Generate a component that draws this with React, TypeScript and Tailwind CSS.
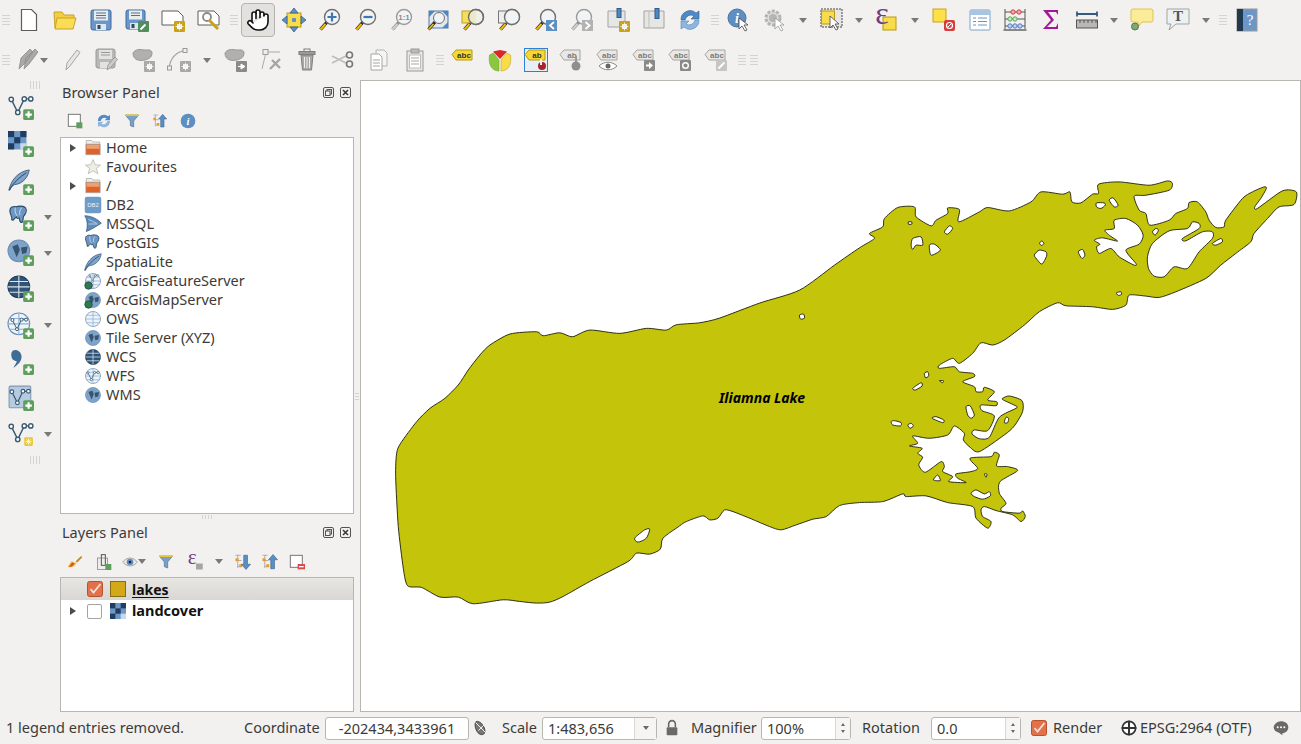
import type { ReactNode } from 'react';
import { Hand } from 'lucide-react';

// closed curve through points picked off the zoomed-in reference
type Pt = [number, number];
const z = (ox: number, oy: number, flat: number[]): Pt[] => {
  const out: Pt[] = [];
  for (let i = 0; i < flat.length; i += 2) out.push([ox + flat[i] / 3, oy + flat[i + 1] / 3]);
  return out;
};
const smooth = (pts: Pt[]) => {
  const n = pts.length;
  const f = (v: number) => v.toFixed(1);
  let d = `M${f(pts[0][0])} ${f(pts[0][1])}`;
  for (let i = 0; i < n; i++) {
    const p0 = pts[(i - 1 + n) % n];
    const p1 = pts[i];
    const p2 = pts[(i + 1) % n];
    const p3 = pts[(i + 2) % n];
    const k = 8;
    d += `C${f(p1[0] + (p2[0] - p0[0]) / k)} ${f(p1[1] + (p2[1] - p0[1]) / k)} ${f(p2[0] - (p3[0] - p1[0]) / k)} ${f(p2[1] - (p3[1] - p1[1]) / k)} ${f(p2[0])} ${f(p2[1])}`;
  }
  return d + 'Z';
};

const outline: Pt[] = [
  ...z(380, 320, [83, 798, 70, 745, 55, 620, 47, 470, 50, 400, 62, 370, 110, 305, 150, 265, 195, 235, 235, 195, 265, 150, 300, 105, 330, 75, 390, 42, 470, 35, 490, 47, 540, 38, 578, 50, 630, 30, 720, 40, 800, 25, 860, 30, 890, 14, 960, 8]),
  [720, 318], [760, 303], [800, 290], [835, 265],
  ...z(860, 170, [0, 233, 45, 205, 30, 190, 70, 170, 75, 145, 115, 112, 165, 110, 170, 140, 215, 167, 230, 150, 265, 130, 265, 113, 300, 118, 298, 155, 360, 125, 385, 112, 450, 122, 515, 95, 545, 65, 610, 72, 632, 65, 638, 95, 665, 98, 700, 72, 718, 70, 718, 42, 780, 35, 870, 45, 925, 32, 940, 40, 930, 60, 860, 75, 825, 78, 840, 120, 860, 130, 872, 165, 930, 150, 950, 130, 985, 115, 990, 97, 1015, 95, 1040, 125, 1050, 150, 1070, 172, 1095, 170, 1100, 150, 1150, 85, 1180, 65, 1215, 50, 1222, 55, 1205, 85, 1187, 110, 1195, 115, 1270, 62, 1312, 65, 1305, 103, 1260, 110, 1230, 140, 1185, 190, 1175, 215, 1130, 250, 1085, 285, 1040, 325, 950, 365, 900, 382, 860, 378, 810, 375, 800, 405, 760, 418, 700, 410, 620, 407, 595, 398, 540, 425, 495, 465]),
  ...z(860, 340, [435, 0, 400, 15, 365, 8, 340, 40, 300, 70, 280, 55, 240, 75, 240, 85, 285, 80, 300, 95, 340, 100, 345, 110, 310, 125, 345, 140, 350, 155, 370, 155, 375, 142, 405, 155, 385, 180, 412, 185, 410, 197, 365, 195, 368, 212, 405, 228, 385, 272, 345, 270, 338, 282, 360, 296, 390, 292, 420, 232, 470, 205, 470, 198, 432, 180, 430, 175, 450, 168, 488, 182, 490, 215, 465, 258, 435, 285, 360, 335, 332, 322, 312, 300, 315, 280, 285, 258, 265, 285, 210, 295, 160, 288, 175, 310, 150, 318, 188, 325, 175, 340, 190, 352, 178, 375, 198, 397, 245, 365, 255, 380, 250, 395, 280, 410, 268, 425, 320, 428, 295, 415, 290, 402, 335, 395, 355, 385, 332, 355, 395, 350, 405, 337, 420, 345, 412, 378, 445, 380, 475, 392, 422, 425, 420, 460, 440, 490, 425, 505, 430, 515, 480, 520, 490, 513, 498, 530, 485, 545, 460, 525, 410, 512, 375, 500, 365, 510, 370, 530, 395, 545, 385, 565, 350, 535, 340, 500, 265, 488, 200, 468, 140, 470, 130, 462, 70, 485]),
  ...z(680, 470, [540, 98, 480, 107, 440, 140, 400, 148, 350, 165, 305, 180, 270, 170, 215, 147, 165, 127, 135, 120, 115, 145, 90, 150, 70, 138, 20, 155, 0, 168]),
  ...z(380, 320, [850, 655, 842, 688, 810, 703, 770, 700, 745, 725, 630, 785, 550, 830, 510, 847, 470, 850, 420, 845, 370, 840, 280, 852, 235, 832, 180, 832, 125, 803]),
];

const holes: Pt[][] = [
  z(860, 170, [147, 155, 157, 155, 157, 162, 147, 162]),
  z(860, 170, [155, 225, 160, 205, 185, 200, 190, 225, 170, 225, 160, 238]),
  z(860, 170, [210, 225, 225, 222, 243, 240, 215, 255]),
  z(860, 170, [255, 185, 270, 167, 280, 175, 265, 192]),
  z(860, 170, [712, 98, 735, 98, 738, 105, 725, 115, 712, 110]),
  z(860, 170, [750, 90, 762, 83, 777, 105, 765, 110]),
  z(860, 170, [547, 212, 554, 220, 547, 226, 541, 220]),
  z(860, 170, [525, 255, 540, 240, 560, 245, 562, 258, 548, 282, 535, 270]),
  z(860, 170, [657, 245, 670, 238, 677, 255, 668, 265]),
  z(860, 170, [737, 180, 765, 175, 765, 150, 800, 145, 835, 165, 852, 195, 840, 222, 800, 240, 830, 280, 825, 285, 780, 260, 755, 235, 720, 250, 712, 230, 722, 222, 705, 210, 730, 203, 775, 213, 750, 195]),
  z(860, 170, [880, 185, 890, 175, 898, 180, 888, 195]),
  z(860, 170, [865, 260, 880, 220, 930, 182, 985, 175, 1000, 155, 1020, 160, 1020, 175, 970, 205, 980, 212, 1030, 185, 1060, 185, 1060, 205, 1020, 245, 985, 295, 945, 290, 915, 320, 885, 318, 868, 295]),
  z(860, 170, [1060, 220, 1085, 205, 1090, 215, 1070, 225]),
  z(860, 170, [772, 368, 785, 365, 787, 373, 777, 376]),
  z(860, 340, [195, 100, 205, 95, 208, 108, 198, 113]),
  z(860, 340, [160, 145, 185, 128, 188, 138, 168, 150]),
  z(860, 340, [240, 122, 252, 122, 250, 128]),
  z(860, 340, [320, 200, 333, 198, 345, 225, 335, 235, 325, 225]),
  z(860, 340, [440, 232, 448, 235, 445, 248, 435, 248]),
  z(860, 340, [95, 245, 105, 242, 125, 248, 123, 258, 100, 255]),
  z(860, 340, [145, 255, 155, 250, 162, 258, 152, 265]),
  z(860, 340, [218, 235, 230, 230, 253, 240, 250, 248]),
  z(860, 340, [222, 420, 235, 405, 243, 422]),
  z(860, 340, [375, 402, 383, 403, 380, 412]),
  z(860, 340, [335, 460, 350, 450, 375, 462, 390, 455, 393, 468, 370, 478, 345, 470]),
  z(380, 320, [765, 655, 795, 630, 810, 628, 800, 655, 775, 667]),
  [[800, 315], [804, 314], [805, 318], [801, 319]],
];

const lakePath = smooth(outline) + holes.map(smooth).join('');

// icon primitives, 24 x 24 box
function Ic({ children, size = 24 }: { children: ReactNode; size?: number }) {
  return (
    <svg width={size} height={size} viewBox="0 0 24 24" className="block shrink-0 overflow-visible">
      {children}
    </svg>
  );
}

function Slot({ children, className = 'w-[36px]' }: { children?: ReactNode; className?: string }) {
  return <div className={`flex h-full shrink-0 items-center justify-center ${className}`}>{children}</div>;
}

function Drop({ className = 'w-[14px]' }: { className?: string }) {
  return (
    <div className={`flex h-full shrink-0 items-center justify-center ${className}`}>
      <div className="h-0 w-0 border-x-[4px] border-t-[5px] border-x-transparent border-t-[#7b7974]" />
    </div>
  );
}

function GripV({ className = 'w-[14px]' }: { className?: string }) {
  return (
    <div className={`flex h-full shrink-0 items-center justify-center ${className}`}>
      <div className="flex w-[8px] flex-col gap-[2px]">
        <div className="h-px bg-[#d5d3cf]" />
        <div className="h-px bg-[#d5d3cf]" />
        <div className="h-px bg-[#d5d3cf]" />
        <div className="h-px bg-[#d5d3cf]" />
      </div>
    </div>
  );
}

function GripH() {
  return (
    <div className="flex h-[8px] items-center justify-center gap-[2px]">
      <div className="h-[8px] w-px bg-[#d5d3cf]" />
      <div className="h-[8px] w-px bg-[#d5d3cf]" />
      <div className="h-[8px] w-px bg-[#d5d3cf]" />
      <div className="h-[8px] w-px bg-[#d5d3cf]" />
    </div>
  );
}

const Plus = ({ x = 14, y = 14 }: { x?: number; y?: number }) => (
  <g>
    <rect x={x} y={y} width="10" height="10" rx="1.5" fill="#5f9e5c" />
    <path d={`M${x + 5} ${y + 2}v6M${x + 2} ${y + 5}h6`} stroke="#fff" strokeWidth="2" />
  </g>
);

const Gear = ({ x = 13, y = 13, grey = false }: { x?: number; y?: number; grey?: boolean }) => (
  <g>
    <rect x={x} y={y} width="11" height="11" rx="1" fill={grey ? '#a8a8a6' : '#c9a21a'} />
    <circle cx={x + 5.5} cy={y + 5.5} r="2" fill="none" stroke="#fff" strokeWidth="1.2" />
    <path d={`M${x + 5.5} ${y + 1.5}v8M${x + 1.5} ${y + 5.5}h8M${x + 2.8} ${y + 2.8}l5.4 5.4M${x + 8.2} ${y + 2.8}l-5.4 5.4`} stroke="#fff" strokeWidth="0.8" />
  </g>
);

function Mag({ children, grey = false, lens = '#f1f4f6' }: { children?: ReactNode; grey?: boolean; lens?: string }) {
  return (
    <Ic>
      <path d="M9 14L2.5 21.5" stroke={grey ? '#8f8f8d' : '#2e2c28'} strokeWidth="3.4" />
      <path d="M7.5 16L2.5 21.5" stroke={grey ? '#cfcfcd' : '#eeb913'} strokeWidth="2" />
      <circle cx="14" cy="9" r="7.5" fill={lens} stroke={grey ? '#9b9b99' : '#6f6f6d'} strokeWidth="1.4" />
      {children}
    </Ic>
  );
}

const Doc = ({ grey = false }: { grey?: boolean }) => (
  <path d="M4.5 1.5h10l5 5v16h-15z" fill="#fff" stroke={grey ? '#999' : '#5c5c5a'} strokeWidth="1.2" />
);

const VShape = ({ color = '#3a5a72', dx = 0, dy = 0, s = 1 }: { color?: string; dx?: number; dy?: number; s?: number }) => (
  <g transform={`translate(${dx} ${dy}) scale(${s})`} fill="#fff" stroke={color} strokeWidth="1.3">
    <path d="M3 5L9 17L15 4.500L21 4.500" fill="none" />
    <circle cx="3" cy="5" r="2" />
    <circle cx="9" cy="17" r="2" />
    <circle cx="15" cy="4.500" r="2" />
    <circle cx="21" cy="4.500" r="2" />
  </g>
);

const Globe = ({ dark = false, pale = false, r = 10, cx = 12, cy = 12 }: { dark?: boolean; pale?: boolean; r?: number; cx?: number; cy?: number }) => (
  <g>
    <circle cx={cx} cy={cy} r={r} fill={dark ? '#2f5478' : pale ? '#eef4fa' : '#7ea3c8'} stroke={dark ? '#1f3d5c' : '#6a8fb5'} strokeWidth="1" />
    {dark || pale ? (
      <path d={`M${cx - r} ${cy}h${2 * r}M${cx - r + 1.500} ${cy - r / 2}h${2 * r - 3}M${cx - r + 1.500} ${cy + r / 2}h${2 * r - 3}M${cx} ${cy - r}v${2 * r}`} stroke={dark ? '#dbe6f0' : '#8eb0d2'} strokeWidth="1" fill="none" />
    ) : (
      <path d={`M${cx - r * 0.6} ${cy - r * 0.4}l${r * 0.5} -${r * 0.2}l${r * 0.2} ${r * 0.5}l-${r * 0.3} ${r * 0.7}zM${cx + r * 0.2} ${cy - r * 0.3}l${r * 0.6} -${r * 0.1}l-${r * 0.1} ${r * 0.6}l-${r * 0.4} ${r * 0.1}z`} fill="#39546f" />
    )}
  </g>
);

const Elephant = ({ s = 1, dx = 0, dy = 0 }: { s?: number; dx?: number; dy?: number }) => (
  <g transform={`translate(${dx} ${dy}) scale(${s})`}>
    <path d="M2 6C2 2 6 1 9 2c2-1 8-1.500 10 1c2 3 0 7-2 9c-1 2 0 6-2 7c-3 0-2-4-3-5c-2 1-3 0-3-1c-2 1-3 5-5 3C5 13 2 10 2 6z" fill="#6d97c2" stroke="#2b4a68" strokeWidth="1.2" />
    <path d="M8 3c-1 3 0 6 2 9M15 3c-2 2-3 4-2 8" fill="none" stroke="#dbe6f0" strokeWidth="0.9" />
  </g>
);

const Feather = ({ s = 1, dx = 0, dy = 0 }: { s?: number; dx?: number; dy?: number }) => (
  <g transform={`translate(${dx} ${dy}) scale(${s})`}>
    <path d="M1 23C3 13 10 3 23 1C22 8 17 16 7 17C5 18 3 20 2 23z" fill="#7fa4ca" stroke="#3d5f80" strokeWidth="1" />
    <path d="M1 23C6 15 12 9 20 4" stroke="#24425e" strokeWidth="1" fill="none" />
  </g>
);

const Checker = ({ s = 1, dx = 0, dy = 0 }: { s?: number; dx?: number; dy?: number }) => (
  <g transform={`translate(${dx} ${dy}) scale(${s})`}>
    <rect x="0" y="0" width="20" height="20" fill="#6d97c6" />
    <rect x="0" y="0" width="6.700" height="6.700" fill="#1f3d60" />
    <rect x="13.300" y="0" width="6.700" height="6.700" fill="#1f3d60" />
    <rect x="6.700" y="6.700" width="6.700" height="6.700" fill="#1f3d60" />
    <rect x="0" y="13.300" width="6.700" height="6.700" fill="#1f3d60" />
    <rect x="13.300" y="13.300" width="6.700" height="6.700" fill="#c9d9ea" />
  </g>
);

const Folder = () => (
  <Ic size={18}>
    <path d="M3 2h7l2 2h9v3H3z" fill="#efeeec" stroke="#a8a6a2" strokeWidth="1" />
    <rect x="2.500" y="7" width="19" height="14" fill="#e0622b" stroke="#a8a6a2" strokeWidth="1" />
    <rect x="3.500" y="8" width="17" height="5" fill="#f0a070" />
  </Ic>
);

const LabelTag = ({ grey = false, text = 'abc' }: { grey?: boolean; text?: string }) => (
  <g>
    <path d="M1 6.500L5 2h16v10H5z" fill={grey ? '#e8e8e6' : '#f6d832'} stroke={grey ? '#a4a4a2' : '#b89a10'} strokeWidth="1" />
    <text x="13" y="10.200" textAnchor="middle" fontSize="8" fontWeight="700" fontFamily="'Liberation Sans', sans-serif" fill={grey ? '#7a7a78' : '#333'}>{text}</text>
  </g>
);

const Filter = ({ grey = false }: { grey?: boolean }) => (
  <g>
    <path d="M2 3h20l-7.500 9v9l-5-2v-7z" fill="#7aa0c6" stroke="#4d7399" strokeWidth="1" />
    <rect x="2" y="2" width="20" height="2.500" fill={grey ? '#aaa' : '#e8c83a'} />
  </g>
);

const UpDown = ({ up }: { up: boolean }) => (
  <g>
    <path d="M2 3h7M5 3v17M5 10h5M5 18h5" stroke="#9c9a96" strokeWidth="1" fill="none" />
    <rect x="2" y="7" width="4" height="4" fill="#eb9a2c" />
    <rect x="7" y="15" width="4" height="4" fill="#eb9a2c" />
    <path d={up ? 'M16 2l6 7h-4v12h-5V9H10z' : 'M16 22l6-7h-4V3h-5v12H10z'} fill="#5a8fc4" stroke="#365f88" strokeWidth="0.8" />
  </g>
);

const Arrow = ({ className = 'w-[24px]' }: { className?: string }) => (
  <div className={`flex h-[19px] shrink-0 items-center justify-center ${className}`}>
    <div className="h-0 w-0 border-y-[4px] border-l-[6px] border-y-transparent border-l-[#4d4c48]" />
  </div>
);

function TreeRow({ label, arrow = false, children }: { label: string; arrow?: boolean; children: ReactNode }) {
  return (
    <div className="flex h-[19px] items-center">
      {arrow ? <Arrow className="w-[23px]" /> : <div className="w-[23px] shrink-0" />}
      <div className="flex w-[22px] shrink-0 items-center justify-start">{children}</div>
      <span className="whitespace-nowrap">{label}</span>
    </div>
  );
}

const FloatClose = () => (
  <div className="ml-auto flex items-center gap-[6px] pr-[3px]">
    <svg width="11" height="11" viewBox="0 0 11 11" className="block">
      <rect x="0.500" y="0.500" width="10" height="10" rx="1.500" fill="none" stroke="#55534f" />
      <rect x="4" y="2.500" width="4.500" height="4.500" fill="none" stroke="#55534f" />
      <rect x="2.500" y="4" width="4.500" height="4.500" fill="#f2f1f0" stroke="#55534f" />
    </svg>
    <svg width="11" height="11" viewBox="0 0 11 11" className="block">
      <rect x="0.500" y="0.500" width="10" height="10" rx="1.500" fill="none" stroke="#55534f" />
      <path d="M3 3l5 5M8 3l-5 5" stroke="#3c3b37" strokeWidth="1.600" />
    </svg>
  </div>
);

function Spin({ value, className }: { value: string; className: string }) {
  return (
    <div className={`flex h-[23px] shrink-0 items-center rounded-[3px] border border-[#b8b6b1] bg-white ${className}`}>
      <span className="flex-1 pl-[5px]">{value}</span>
      <div className="flex h-full w-[15px] flex-col items-center justify-center gap-[4px] border-l border-[#d9d7d3] bg-[#f6f5f4]">
        <div className="h-0 w-0 border-x-[2.500px] border-b-[3px] border-x-transparent border-b-[#6b6a66]" />
        <div className="h-0 w-0 border-x-[2.500px] border-t-[3px] border-x-transparent border-t-[#6b6a66]" />
      </div>
    </div>
  );
}

const CheckOn = () => (
  <svg width="16" height="16" viewBox="0 0 16 16" className="block">
    <rect x="0.500" y="0.500" width="15" height="15" rx="2" fill="#e2704a" stroke="#b9502e" />
    <path d="M3.500 8l3 3.500L13.500 3" stroke="#f3e3d4" strokeWidth="1.800" fill="none" />
  </svg>
);

export default function App() {
  return (
    <div className="flex h-[744px] w-[1301px] flex-col overflow-hidden bg-[#f2f1f0] text-[14.5px] leading-none text-[#3c3b37] [font-family:'Noto_Sans',sans-serif]">
      {/* Main toolbar */}
      <div className="flex h-[40px] shrink-0 items-center">
        <GripV className="w-[11px]" />
        <Slot><Ic><Doc /></Ic></Slot>
        <Slot><Ic><path d="M2 20L1 4h8l2 3h10v3" fill="#f0cf45" stroke="#c9a227" strokeWidth="1" /><path d="M4 10h19l-3 11H2z" fill="#fbdc55" stroke="#c9a227" strokeWidth="1" /></Ic></Slot>
        <Slot><Ic><rect x="2" y="2" width="20" height="20" rx="2" fill="#6a96c8" stroke="#3f6a9e" /><rect x="5" y="2.500" width="14" height="10" fill="#e9ecef" /><path d="M7 5h10M7 7.500h10M7 10h10" stroke="#5d6e80" /><rect x="7" y="16" width="10" height="6" fill="#dfe6ee" /><rect x="8.500" y="17" width="3" height="4" fill="#2b4a68" /></Ic></Slot>
        <Slot><Ic><rect x="1" y="2" width="19" height="19" rx="2" fill="#6a96c8" stroke="#3f6a9e" /><rect x="4" y="2.500" width="13" height="9" fill="#e9ecef" /><path d="M6 5h9M6 7.500h9" stroke="#5d6e80" /><rect x="5" y="15" width="9" height="6" fill="#dfe6ee" /><rect x="6.500" y="16" width="3" height="4" fill="#2b4a68" /><rect x="13" y="13" width="11" height="11" rx="1" fill="#4f8f5c" /><path d="M15.500 21.500l5-5" stroke="#fff" strokeWidth="2" /></Ic></Slot>
        <Slot><Ic><path d="M1 3h16l5 5v9H1z" fill="#fff" stroke="#5c5c5a" strokeWidth="1" /><Gear /></Ic></Slot>
        <Slot><Ic><path d="M1 3h16l5 5v9H1z" fill="#fff" stroke="#5c5c5a" strokeWidth="1" /><circle cx="10" cy="9" r="4" fill="none" stroke="#8a8a88" strokeWidth="1.800" /><path d="M12 12l9 9" stroke="#c9a21a" strokeWidth="3" /></Ic></Slot>
        <GripV className="w-[14px]" />
        <div className="mr-[1px] flex h-[34px] w-[34px] shrink-0 items-center justify-center rounded-[4px] border border-[#b6b4af] bg-[#e3e1de]">
          <Hand size={24} strokeWidth={1.6} color="#111" fill="#fff" />
        </div>
        <Slot><Ic><rect x="5" y="5" width="14" height="14" fill="#f8dc4a" stroke="#b89a10" /><path d="M12 0l4 5h-8zM12 24l4-5h-8zM0 12l5-4v8zM24 12l-5-4v8z" fill="#5d90c4" stroke="#365f88" strokeWidth="0.8" /><path d="M10 12h4M12 10v4" stroke="#5d90c4" strokeWidth="3" /></Ic></Slot>
        <Slot><Mag><path d="M14 4.500v9M9.500 9h9" stroke="#3f76ad" strokeWidth="2.200" /></Mag></Slot>
        <Slot><Mag><path d="M9.500 9h9" stroke="#3f76ad" strokeWidth="2.200" /></Mag></Slot>
        <Slot><Mag grey><text x="14" y="12" textAnchor="middle" fontSize="8" fontWeight="700" fontFamily="'Liberation Sans', sans-serif" fill="#8c8c8a">1:1</text></Mag></Slot>
        <Slot><Ic><rect x="3" y="3" width="19" height="17" fill="#dfe8f1" stroke="#4f7ba8" /><path d="M3 3l6 0l-6 6zM22 3h-6l6 6zM22 20h-6l6-6z" fill="#4f86bd" /><path d="M9 14L2.500 21.500" stroke="#2e2c28" strokeWidth="3.200" /><path d="M7.500 16L2.500 21.500" stroke="#eeb913" strokeWidth="1.800" /><circle cx="13" cy="10" r="5.500" fill="#f1f4f6" stroke="#6f6f6d" /></Ic></Slot>
        <Slot><Mag lens="#f1f0e6"><rect x="0" y="3" width="12" height="12" fill="#f8dc4a" stroke="#b89a10" opacity="0.9" /><path d="M14 1.500a7.500 7.500 0 0 0 0 15z" fill="#ece9c9" /><circle cx="14" cy="9" r="7.500" fill="none" stroke="#6f6f6d" strokeWidth="1.400" /></Mag></Slot>
        <Slot><Mag><rect x="0.500" y="3" width="11" height="12" fill="#eee" stroke="#777" /><circle cx="14" cy="9" r="7.500" fill="#f1f4f6" stroke="#6f6f6d" strokeWidth="1.400" /></Mag></Slot>
        <Slot><Mag><rect x="12" y="12" width="11" height="11" fill="#5d8fc2" /><path d="M20 14l-4 3.500l4 3.500" fill="none" stroke="#fff" strokeWidth="1.800" /></Mag></Slot>
        <Slot><Mag grey><rect x="12" y="12" width="11" height="11" fill="#b3b3b1" /><path d="M15.500 14l4 3.500l-4 3.500" fill="none" stroke="#fff" strokeWidth="1.800" /></Mag></Slot>
        <Slot><Ic><path d="M2 3h17v16H2z" fill="#e6e6e4" stroke="#a3a3a1" /><rect x="11" y="0.500" width="4" height="9" fill="#4f86bd" stroke="#2f5d8a" /><Gear x={13} y={13} /></Ic></Slot>
        <Slot><Ic><path d="M2 3h20v17H2z" fill="#e6e6e4" stroke="#a3a3a1" /><path d="M7 3v17" stroke="#bdbdbb" /><rect x="13" y="0.500" width="4" height="10" fill="#4f86bd" stroke="#2f5d8a" /></Ic></Slot>
        <Slot><Ic><path d="M3 12a9 9 0 0 1 15-7l3-2v8h-8l3-3a6 6 0 0 0-9 4z" fill="#4f8ac6" stroke="#2f6296" strokeWidth="0.600" /><path d="M21 12a9 9 0 0 1-15 7l-3 2v-8h8l-3 3a6 6 0 0 0 9-4z" fill="#8fb6dc" stroke="#4f86bd" strokeWidth="0.600" /></Ic></Slot>
        <GripV className="w-[13px]" />
        <Slot><Ic><circle cx="10" cy="10" r="9" fill="#5d8fc2" stroke="#47759f" /><text x="10" y="15" textAnchor="middle" fontSize="14" fontWeight="700" fontStyle="italic" fontFamily="'Liberation Serif', serif" fill="#fff">i</text><path d="M12 10l0 11l3-3l3 5l2-1l-3-5l4 0z" fill="#fff" stroke="#444" strokeWidth="0.800" /></Ic></Slot>
        <Slot><Ic><circle cx="10" cy="10" r="7" fill="#ddd" stroke="#b3b3b1" strokeWidth="3" strokeDasharray="3 1.500" /><circle cx="10" cy="10" r="4" fill="#b5b5b3" /><path d="M12 10l0 11l3-3l3 5l2-1l-3-5l4 0z" fill="#fff" stroke="#999" strokeWidth="0.800" /></Ic></Slot>
        <Drop className="ml-[3px] w-[14px]" />
        <Slot className="ml-[4px] w-[36px]"><Ic><rect x="1" y="1" width="21" height="18" fill="#e7e6e4" stroke="#444" strokeDasharray="2 1" /><rect x="1.500" y="3" width="13" height="13" fill="#f8dc4a" stroke="#b89a10" /><path d="M10 8l0 12l3-3l3 5l2-1l-3-5l4 0z" fill="#fff" stroke="#444" strokeWidth="0.800" /></Ic></Slot>
        <Drop className="ml-[2px] w-[14px]" />
        <Slot className="ml-[3px] w-[36px]"><Ic><rect x="8" y="9" width="13" height="13" fill="#f8dc4a" stroke="#b89a10" /><text x="7" y="16" textAnchor="middle" fontSize="32" fontFamily="'Liberation Serif', serif" fill="#6d3f83">ε</text></Ic></Slot>
        <Drop className="ml-[3px] w-[14px]" />
        <Slot className="ml-[4px] w-[36px]"><Ic><rect x="1" y="1" width="13" height="13" fill="#fde04a" stroke="#c9a21a" /><rect x="12" y="12" width="11" height="11" rx="2" fill="#d83c3c" /><circle cx="17.500" cy="17.500" r="3" fill="none" stroke="#fff" strokeWidth="1.200" /><path d="M15.500 19.500l4-4" stroke="#fff" /></Ic></Slot>
        <Slot className="w-[35px]"><Ic><rect x="2" y="2" width="20" height="20" rx="1" fill="#fff" stroke="#7aa3cc" /><rect x="2" y="2" width="20" height="5" fill="#a8c6e2" /><path d="M5 10h3M10 10h9M5 13.500h3M10 13.500h9M5 17h3M10 17h9" stroke="#6d97c2" /></Ic></Slot>
        <Slot className="w-[36px]"><Ic><path d="M2 21V1M22 21V1M2 4h20M2 11h20M2 18h20" stroke="#555" fill="none" /><circle cx="10" cy="4" r="2.200" fill="#f2a8a8" stroke="#c44" /><circle cx="16" cy="4" r="2.200" fill="#f2a8a8" stroke="#c44" /><circle cx="7" cy="11" r="2.200" fill="#c8e6c0" stroke="#5a5" /><circle cx="12" cy="11" r="2.200" fill="#c8e6c0" stroke="#5a5" /><circle cx="7" cy="18" r="2.200" fill="#bcd4ec" stroke="#57c" /><circle cx="12" cy="18" r="2.200" fill="#bcd4ec" stroke="#57c" /><circle cx="17" cy="18" r="2.200" fill="#bcd4ec" stroke="#57c" /><rect x="0.500" y="21" width="23" height="2" fill="#888" /></Ic></Slot>
        <Slot className="w-[35px]"><Ic><path d="M4 2h15v5l-2-3H9l6 8l-7 7h9l2-4v6H4l8-9z" fill="#a3159b" /></Ic></Slot>
        <Slot className="w-[37px]"><Ic><path d="M2 6h20M2 3.500v5M22 3.500v5" stroke="#355b80" strokeWidth="1.800" /><rect x="1.500" y="12" width="21" height="8" fill="#b8b8b6" stroke="#555" /><path d="M5 12v3M9 12v3M13 12v3M17 12v3M21 12v3" stroke="#555" /></Ic></Slot>
        <Drop className="ml-[2px] w-[14px]" />
        <Slot className="ml-[3px] w-[36px]"><Ic><path d="M3 1h18a2 2 0 0 1 2 2v9a2 2 0 0 1-2 2H12l-4 5v-5H3a2 2 0 0 1-2-2V3a2 2 0 0 1 2-2z" fill="#fcec9a" stroke="#e0c34a" /><circle cx="5" cy="18.500" r="3.500" fill="#7fa879" stroke="#4f7a4a" /></Ic></Slot>
        <Slot><Ic><path d="M1 1h22v15H10l-7 6l2-6H1z" fill="#eef1f3" stroke="#a3a3a1" /><text x="12" y="13" textAnchor="middle" fontSize="15" fontWeight="700" fontFamily="'Liberation Serif', serif" fill="#50565c">T</text></Ic></Slot>
        <Drop className="ml-[3px] w-[14px]" />
        <GripV className="ml-[4px] w-[12px]" />
        <Slot><Ic><rect x="2" y="1" width="20" height="22" fill="#6a96c8" stroke="#9a9a98" /><rect x="2" y="1" width="6" height="22" fill="#22384d" /><text x="15" y="17" textAnchor="middle" fontSize="15" fontFamily="'Liberation Serif', serif" fill="#fff">?</text></Ic></Slot>
      </div>

      {/* Second toolbar, mostly disabled */}
      <div className="flex h-[40px] shrink-0 items-center">
        <GripV className="w-[11px]" />
        <Slot className="w-[34px]"><Ic><path d="M3 21L5 10l9-9l3 3L8 16zM8 21l2-11l9-9l3 3l-9 12z" fill="#a9a9a7" stroke="#8a8a88" strokeWidth="0.800" /></Ic></Slot>
        <Drop className="ml-[-5px] w-[8px]" />
        <Slot className="ml-[5px] w-[36px]"><Ic><path d="M7 22l1-7L18 2l3 2.500L11 18z" fill="#e6e6e4" stroke="#a5a5a3" /></Ic></Slot>
        <Slot className="w-[36px]"><Ic><rect x="1" y="1" width="19" height="19" rx="2" fill="#b8b8b6" stroke="#9a9a98" /><rect x="4" y="2" width="13" height="9" fill="#e2e2e0" /><path d="M6 4.500h9M6 7h9" stroke="#9a9a98" /><rect x="5" y="14" width="9" height="6" fill="#e2e2e0" /><path d="M12 22l1-5l7-8l2.500 2.500l-7 8z" fill="#ccc" stroke="#888" strokeWidth="0.700" /></Ic></Slot>
        <Slot className="w-[36px]"><Ic><path d="M2 5c2-4 8-4 11-3c3 0 8-1 8 3c0 5-4 6-7 7c-4 1-12 1-12-7z" fill="#b0b0ae" stroke="#969694" /><Gear x={13} y={13} grey /></Ic></Slot>
        <Slot className="w-[36px]"><Ic><path d="M2 21C3 10 8 4 19 2" fill="none" stroke="#a3a3a1" strokeWidth="1.200" /><rect x="0.500" y="18" width="4" height="4" fill="#eee" stroke="#999" /><rect x="16" y="0.500" width="4" height="4" fill="#eee" stroke="#999" /><Gear x={13} y={13} grey /></Ic></Slot>
        <Drop className="ml-[5px] w-[10px]" />
        <Slot className="ml-[5px] w-[36px]"><Ic><path d="M2 5c2-4 8-4 11-3c3 0 8-1 8 3c0 5-4 6-7 7c-4 1-12 1-12-7z" fill="#b0b0ae" stroke="#969694" /><rect x="13" y="13" width="11" height="11" rx="1" fill="#8a8a88" /><path d="M15 18.500h3V16l4 2.500l-4 2.500v-2.500h-3z" fill="#fff" stroke="#fff" /></Ic></Slot>
        <Slot className="ml-[1px] w-[35px]"><Ic><rect x="3" y="1.500" width="5" height="5" fill="#eee" stroke="#999" /><path d="M8 4h12M5.500 6.500L2 21" stroke="#aaa" /><path d="M10 21l10-10M12 12l8 8" stroke="#a5a5a3" strokeWidth="2.400" /></Ic></Slot>
        <Slot className="w-[36px]"><Ic><path d="M6 7l1.500 15h9L18 7z" fill="#a8a8a6" stroke="#7f7f7d" /><rect x="4" y="3.500" width="16" height="3" fill="#9a9a98" stroke="#7f7f7d" /><rect x="9" y="1" width="6" height="2.500" fill="none" stroke="#7f7f7d" /><path d="M9.500 9v11M12 9v11M14.500 9v11" stroke="#eee" /></Ic></Slot>
        <Slot className="w-[36px]"><Ic><path d="M1 8l14 7M1 15l14-7" stroke="#bdbdbb" strokeWidth="1.600" /><circle cx="18.500" cy="7" r="3" fill="none" stroke="#777" strokeWidth="1.600" /><circle cx="18.500" cy="16" r="3" fill="none" stroke="#777" strokeWidth="1.600" /></Ic></Slot>
        <Slot className="w-[36px]"><Ic><path d="M9 2h8l3 3v13H9z" fill="#f4f4f2" stroke="#b3b3b1" /><path d="M4 6h8l3 3v13H4z" fill="#fff" stroke="#a5a5a3" /><path d="M6 12h7M6 15h7M6 18h7" stroke="#a5a5a3" /></Ic></Slot>
        <Slot className="w-[36px]"><Ic><rect x="4" y="3" width="16" height="20" fill="#e8e8e6" stroke="#999" /><rect x="8" y="1" width="8" height="4" fill="#bbb" stroke="#999" /><rect x="6.500" y="7" width="11" height="13" fill="#fff" stroke="#bbb" /><path d="M8 10h8M8 13h8M8 16h8" stroke="#a5a5a3" /></Ic></Slot>
        <GripV className="ml-[2px] w-[10px]" />
        <Slot className="ml-[4px] w-[28px]"><Ic><LabelTag /></Ic></Slot>
        <Slot className="ml-[1px] w-[44px]"><Ic><path d="M12 2l7 1.500L12 11L5 3.500z" fill="#d82828" /><path d="M11 12v11C4 23 0 17 1.500 7l4-2z" fill="#8cc63f" stroke="#6a9a2c" strokeWidth="0.500" /><path d="M13 12v11c7 0 11-6 9.500-16l-4-2z" fill="#f8dc4a" stroke="#b89a10" strokeWidth="0.500" /></Ic></Slot>
        <Slot className="w-[28px]"><Ic><rect x="0.500" y="0.500" width="23" height="23" fill="#e7eef6" stroke="#2f7fd6" /><LabelTag text="ab" /><circle cx="18" cy="18" r="4" fill="#a8232a" /><path d="M17 11v6" stroke="#eee" strokeWidth="2" /></Ic></Slot>
        <Slot className="ml-[-1px] w-[44px]"><Ic><LabelTag grey text="ab" /><path d="M17 8v7" stroke="#999" strokeWidth="2" /><circle cx="17" cy="18" r="4.500" fill="#8f8f8d" /></Ic></Slot>
        <Slot className="w-[29px]"><Ic><LabelTag grey /><path d="M3 18c5-5 13-5 18 0c-5 5-13 5-18 0z" fill="#fff" stroke="#888" /><circle cx="12" cy="18" r="2.500" fill="#666" /></Ic></Slot>
        <Slot className="w-[43px]"><Ic><LabelTag grey /><rect x="12" y="12" width="11" height="11" rx="1" fill="#8a8a88" /><path d="M14 16.500h3V14l4 3.500l-4 3.500v-2.500h-3z" fill="#fff" /></Ic></Slot>
        <Slot className="w-[29px]"><Ic><LabelTag grey /><rect x="12" y="12" width="11" height="11" rx="1" fill="#8a8a88" /><circle cx="17.500" cy="17.500" r="2.800" fill="none" stroke="#fff" strokeWidth="1.400" /></Ic></Slot>
        <Slot className="w-[43px]"><Ic><LabelTag grey /><rect x="12" y="12" width="11" height="11" rx="1" fill="#c5c5c3" /><path d="M14.500 20.500l6-6" stroke="#fff" strokeWidth="2" /></Ic></Slot>
        <GripV className="ml-[-1px] w-[12px]" />
        <GripV className="w-[12px]" />
      </div>

      <div className="flex min-h-0 flex-1">
        {/* Left vertical toolbar */}
        <div className="flex w-[60px] shrink-0 flex-col pt-[1px]">
          <div className="flex h-[8px] w-[40px] items-center justify-end"><GripH /></div>
          <div className="flex h-[36px] items-center pl-[8px]"><Ic size={26}><VShape /><Plus /></Ic></div>
          <div className="flex h-[38px] items-center pl-[8px]"><Ic size={26}><Checker s={0.85} /><Plus /></Ic></div>
          <div className="flex h-[37px] items-center pl-[8px]"><Ic size={26}><Feather s={0.85} /><Plus /></Ic></div>
          <div className="flex h-[35px] items-center pl-[8px]"><Ic size={26}><Elephant s={0.85} /><Plus /></Ic><Drop className="ml-[7px] w-[14px]" /></div>
          <div className="flex h-[36px] items-center pl-[8px]"><Ic size={26}><Globe r={10} cx={10} cy={10} /><Plus /></Ic><Drop className="ml-[7px] w-[14px]" /></div>
          <div className="flex h-[36px] items-center pl-[8px]"><Ic size={26}><Globe dark r={10} cx={10} cy={10} /><Plus /></Ic></div>
          <div className="flex h-[37px] items-center pl-[8px]"><Ic size={26}><Globe pale r={10} cx={10} cy={10} /><VShape dx={2} dy={3} s={0.7} /><Plus /></Ic><Drop className="ml-[7px] w-[14px]" /></div>
          <div className="flex h-[36px] items-center pl-[8px]"><Ic size={26}><path d="M3 5c0-4 4-5 7-3c4 3 3 9-1 12c-1 1-3 3-4 3c1-2 3-4 3-6C5 11 3 9 3 5z" fill="#3f6d96" /><Plus /></Ic></div>
          <div className="flex h-[36px] items-center pl-[8px]"><Ic size={26}><rect x="1" y="1" width="20" height="20" rx="1" fill="#b6cbe0" stroke="#7f9ab5" /><VShape dx={1} dy={2} s={0.85} /><Plus /></Ic></div>
          <div className="flex h-[36px] items-center pl-[8px]"><Ic size={26}><VShape /><rect x="15" y="15" width="8" height="8" rx="1" fill="#e8c83a" /><path d="M19 16v6M16 19h6M17 17l4 4M21 17l-4 4" stroke="#fff" strokeWidth="0.700" /></Ic><Drop className="ml-[7px] w-[14px]" /></div>
          <div className="flex h-[16px] w-[40px] items-center justify-end"><GripH /></div>
        </div>

        <div className="flex w-[294px] shrink-0 flex-col">
          <div className="flex h-[26px] shrink-0 items-center pb-[1px] pl-[2px]">
            <span>Browser Panel</span>
            <FloatClose />
          </div>
          <div className="flex h-[31px] shrink-0 items-center pb-[2px] pl-[7px]">
            <Slot className="w-[16px]"><Ic size={16}><rect x="2" y="2" width="18" height="18" fill="#fff" stroke="#777" strokeWidth="1.500" /><rect x="14" y="14" width="9" height="9" fill="#5f9e5c" /></Ic></Slot>
            <Slot className="ml-[13px] w-[16px]"><Ic size={16}><path d="M3 12a9 9 0 0 1 15-7l3-2v8h-8l3-3a6 6 0 0 0-9 4z" fill="#4f8ac6" /><path d="M21 12a9 9 0 0 1-15 7l-3 2v-8h8l-3 3a6 6 0 0 0 9-4z" fill="#8fb6dc" /></Ic></Slot>
            <Slot className="ml-[12px] w-[16px]"><Ic size={16}><Filter /></Ic></Slot>
            <Slot className="ml-[12px] w-[16px]"><Ic size={16}><UpDown up /></Ic></Slot>
            <Slot className="ml-[12px] w-[16px]"><Ic size={16}><circle cx="12" cy="12" r="11" fill="#5d8fc2" /><text x="12" y="18" textAnchor="middle" fontSize="16" fontWeight="700" fontStyle="italic" fontFamily="'Liberation Serif', serif" fill="#fff">i</text></Ic></Slot>
          </div>
          <div className="h-[377px] shrink-0 border border-[#b8b6b1] bg-white">
            <TreeRow label="Home" arrow><Folder /></TreeRow>
            <TreeRow label="Favourites"><Ic size={18}><path d="M12 2l3 7l7 .5l-5.500 4.500l2 7l-6.500-4l-6.500 4l2-7L2 9.500L9 9z" fill="#eeeee6" stroke="#b4b4a6" /></Ic></TreeRow>
            <TreeRow label="/" arrow><Folder /></TreeRow>
            <TreeRow label="DB2"><Ic size={18}><rect x="1" y="1" width="22" height="22" rx="3" fill="#6f9bc9" /><text x="12" y="15" textAnchor="middle" fontSize="8" fontFamily="'Liberation Sans', sans-serif" fill="#e8f0f8">DB2</text></Ic></TreeRow>
            <TreeRow label="MSSQL"><Ic size={18}><path d="M1 1c8 0 17 4 22 10c-5 3-14 9-20 11c2-6 2-15-2-21z" fill="#5d8cba" stroke="#33587c" /><path d="M6 6l11 5M6 12l12 0" stroke="#cfe0f0" /></Ic></TreeRow>
            <TreeRow label="PostGIS"><Ic size={18}><Elephant /></Ic></TreeRow>
            <TreeRow label="SpatiaLite"><Ic size={18}><Feather /></Ic></TreeRow>
            <TreeRow label="ArcGisFeatureServer"><Ic size={18}><Globe pale /><VShape dx={6} dy={2} s={0.6} /><circle cx="6" cy="18" r="5" fill="#2f7a4a" stroke="#1f3d5c" /></Ic></TreeRow>
            <TreeRow label="ArcGisMapServer"><Ic size={18}><Globe /><circle cx="6" cy="18" r="5" fill="#2f7a4a" stroke="#1f3d5c" /></Ic></TreeRow>
            <TreeRow label="OWS"><Ic size={18}><Globe pale /></Ic></TreeRow>
            <TreeRow label="Tile Server (XYZ)"><Ic size={18}><Globe /></Ic></TreeRow>
            <TreeRow label="WCS"><Ic size={18}><Globe dark /></Ic></TreeRow>
            <TreeRow label="WFS"><Ic size={18}><Globe pale /><VShape dx={3} dy={4} s={0.75} /></Ic></TreeRow>
            <TreeRow label="WMS"><Ic size={18}><Globe /></Ic></TreeRow>
          </div>
          <div className="flex h-[6px] shrink-0 items-center justify-center"><div className="flex gap-[2px]"><div className="h-[4px] w-px bg-[#d5d3cf]" /><div className="h-[4px] w-px bg-[#d5d3cf]" /><div className="h-[4px] w-px bg-[#d5d3cf]" /><div className="h-[4px] w-px bg-[#d5d3cf]" /></div></div>
          <div className="flex h-[26px] shrink-0 items-center pb-[1px] pl-[2px]">
            <span>Layers Panel</span>
            <FloatClose />
          </div>
          <div className="flex h-[31px] shrink-0 items-center pl-[7px]">
            <Slot className="w-[16px]"><Ic size={16}><path d="M13 11l8-8l2 2l-8 8z" fill="#c08a3a" /><path d="M14 14c-3 6-8 7-13 5c2-1 3-5 6-8z" fill="#e8b03a" /><path d="M3 19c2-1 3-4 5-6l3 1c-2 3-4 6-8 5z" fill="#d8452c" /></Ic></Slot>
            <Slot className="ml-[13px] w-[16px]"><Ic size={16}><rect x="2" y="6" width="15" height="17" fill="#eee" stroke="#777" /><rect x="8" y="1" width="6" height="16" fill="none" stroke="#555" strokeWidth="1.500" /><rect x="14" y="15" width="9" height="9" fill="#5f9e5c" /></Ic></Slot>
            <Slot className="ml-[10px] w-[16px]"><Ic size={16}><path d="M1 12c6-8 16-8 22 0c-6 8-16 8-22 0z" fill="#e6e6e4" stroke="#8a8a88" /><circle cx="12" cy="12" r="5" fill="#5d8fc2" /><circle cx="12" cy="12" r="2" fill="#222" /></Ic></Slot>
            <Drop className="w-[8px]" />
            <Slot className="ml-[12px] w-[16px]"><Ic size={16}><Filter /></Ic></Slot>
            <Slot className="ml-[13px] w-[18px]"><Ic size={18}><text x="7" y="14" textAnchor="middle" fontSize="28" fontFamily="'Liberation Serif', serif" fill="#6d3f83">ε</text><rect x="12" y="14" width="9" height="8" fill="#a5a5a3" /></Ic></Slot>
            <Drop className="ml-[7px] w-[14px]" />
            <Slot className="ml-[8px] w-[18px]"><Ic size={18}><UpDown up={false} /></Ic></Slot>
            <Slot className="ml-[9px] w-[18px]"><Ic size={18}><UpDown up /></Ic></Slot>
            <Slot className="ml-[10px] w-[16px]"><Ic size={16}><rect x="2" y="2" width="18" height="18" fill="#fff" stroke="#777" strokeWidth="1.500" /><rect x="13" y="15" width="11" height="8" fill="#d94a4a" /><path d="M15 19h7" stroke="#fff" strokeWidth="2" /></Ic></Slot>
          </div>
          <div className="min-h-0 flex-1 border border-[#b8b6b1] bg-white">
            <div className="flex h-[22px] items-center bg-gradient-to-b from-[#e8e6e3] to-[#d9d7d3]">
              <div className="w-[26px] shrink-0" />
              <CheckOn />
              <div className="ml-[7px] h-[16px] w-[16px] shrink-0 border border-[#8a6d10] bg-[#d4a917]" />
              <span className="ml-[6px] pt-px font-bold text-[14px] text-[#111] underline underline-offset-2">lakes</span>
            </div>
            <div className="flex h-[22px] items-center">
              <Arrow />
              <div className="ml-[2px] h-[15px] w-[15px] shrink-0 rounded-[2px] border border-[#a5a3a0] bg-white" />
              <div className="ml-[8px] shrink-0"><Ic size={16}><Checker s={1.200} /></Ic></div>
              <span className="ml-[6px] pb-[2px] font-bold text-[#111]">landcover</span>
            </div>
          </div>
        </div>

        {/* Splitter */}
        <div className="flex w-[6px] shrink-0 items-center justify-center">
          <div className="flex flex-col gap-[2px]"><div className="h-px w-[4px] bg-[#d5d3cf]" /><div className="h-px w-[4px] bg-[#d5d3cf]" /><div className="h-px w-[4px] bg-[#d5d3cf]" /></div>
        </div>

        {/* Map canvas */}
        <div className="relative min-w-0 flex-1 border border-[#b8b6b1] bg-white">
          <svg viewBox="361 81 940 630" className="block h-full w-full">
            <path d={lakePath} fill="#c4c40a" fillRule="evenodd" stroke="#1c1c0a" strokeWidth="0.9" strokeLinejoin="round" />
          </svg>
          <span className="absolute left-[358px] top-[310px] whitespace-nowrap text-[14px] font-bold italic text-black">Iliamna Lake</span>
        </div>
      </div>

      {/* Status bar */}
      <div className="flex h-[32px] shrink-0 items-center">
        <span className="w-[244px] shrink-0 pb-[2px] pl-[6px]">1 legend entries removed.</span>
        <span className="w-[81px] shrink-0 pb-[1px]">Coordinate</span>
        <div className="flex h-[23px] w-[144px] shrink-0 items-center justify-center rounded-[3px] border border-[#b8b6b1] bg-white">-202434,3433961</div>
        <div className="flex w-[33px] shrink-0 items-center justify-start pl-[4px]"><Ic size={16}><path d="M6 2c6 0 12 8 12 15c0 4-3 5-5 5c-6 0-10-9-10-15c0-3 1-5 3-5z" fill="#777" stroke="#222" /><path d="M4 4l16 16M20 4L8 16" stroke="#eee" strokeWidth="1.500" /></Ic></div>
        <span className="w-[40px] shrink-0 pb-[1px]">Scale</span>
        <div className="flex h-[23px] w-[115px] shrink-0 items-center rounded-[3px] border border-[#b8b6b1] bg-white">
          <span className="flex-1 pl-[5px]">1:483,656</span>
          <div className="flex h-full w-[22px] items-center justify-center border-l border-[#d9d7d3] bg-[#f6f5f4]">
            <div className="h-0 w-0 border-x-[3px] border-t-[4px] border-x-transparent border-t-[#6b6a66]" />
          </div>
        </div>
        <div className="flex w-[34px] shrink-0 items-center pl-[7px]"><Ic size={16}><path d="M7 11V6a5 5 0 0 1 10 0v5" fill="none" stroke="#6a6966" strokeWidth="2.400" /><rect x="4" y="11" width="16" height="12" rx="1.500" fill="#6a6966" /></Ic></div>
        <span className="w-[70px] shrink-0 pb-[1px]">Magnifier</span>
        <Spin value="100%" className="w-[90px]" />
        <span className="ml-[11px] w-[69px] shrink-0 pb-[1px]">Rotation</span>
        <Spin value="0.0" className="w-[90px]" />
        <div className="ml-[10px] shrink-0"><CheckOn /></div>
        <span className="ml-[6px] w-[68px] shrink-0 pb-[2px]">Render</span>
        <div className="w-[19px] shrink-0"><Ic size={16}><circle cx="12" cy="12" r="10" fill="#fff" stroke="#333" strokeWidth="2.500" /><path d="M12 1v22M1 12h22" stroke="#333" strokeWidth="3" /></Ic></div>
        <span className="w-[133px] shrink-0 whitespace-nowrap pb-[1px]">EPSG:2964 (OTF)</span>
        <div className="shrink-0"><Ic size={16}><path d="M12 2c6 0 11 3.500 11 9s-5 9-9 9v3l-5-4C4 18 1 15 1 11S6 2 12 2z" fill="#6a6966" /><circle cx="7" cy="11" r="1.500" fill="#fff" /><circle cx="12" cy="11" r="1.500" fill="#fff" /><circle cx="17" cy="11" r="1.500" fill="#fff" /></Ic></div>
      </div>
    </div>
  );
}
